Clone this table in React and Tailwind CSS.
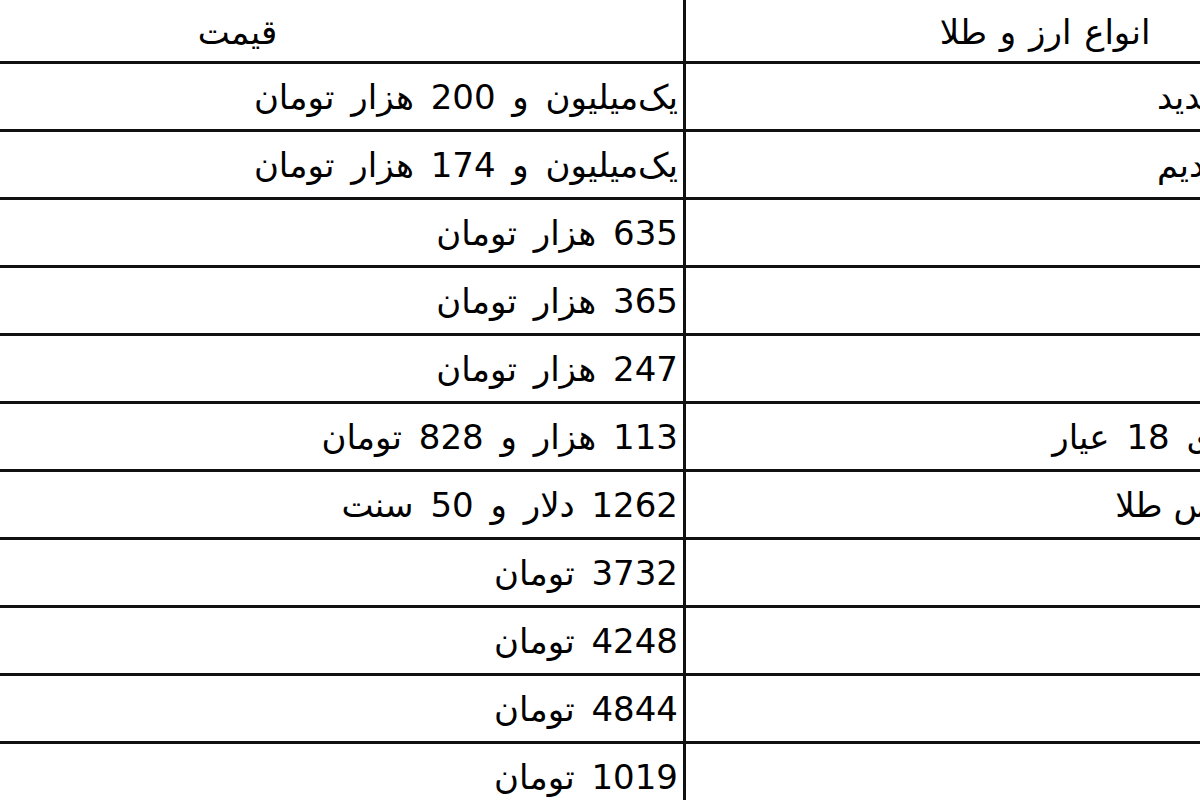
import React from "react";

const rows = [
  ["سکه طرح جدید", "یک‌میلیون و 200 هزار تومان", ""],
  ["سکه طرح قدیم", "یک‌میلیون و 174 هزار تومان", ""],
  ["نیم سکه", "635 هزار تومان", ""],
  ["ربع سکه", "365 هزار تومان", ""],
  ["سکه گرمی", "247 هزار تومان", ""],
  ["یک گرم طلای 18 عیار", "113 هزار و 828 تومان", ""],
  ["قیمت هر اونس طلا", "1262 دلار و 50 سنت", "[word-spacing:0px]"],
  ["دلار", "3732 تومان", ""],
  ["یورو", "4248 تومان", ""],
  ["پوند", "4844 تومان", ""],
  ["درهم", "1019 تومان", ""],
];

export default function App() {
  return (
    <div className="w-[1200px] h-[800px] overflow-hidden bg-white">
      <div
        dir="rtl"
        className="w-[1614px] -ml-[208px] flex flex-col text-black text-[34px] leading-none [word-spacing:6px]"
        style={{ fontFamily: '"DejaVu Sans", sans-serif' }}
      >
        <div className="flex h-[64px] border-b-[3px] border-[#111]">
          <div className="w-[720px] shrink-0 flex items-center justify-center pt-[2px]">
            <span className="mr-[2px] [word-spacing:2px]">انواع ارز و طلا</span>
          </div>
          <div className="w-[894px] shrink-0 border-r-[3px] border-[#111] flex items-center justify-center pt-[2px]">
            قیمت
          </div>
        </div>
        {rows.map(([name, price, extra], i) => (
          <div key={i} className="flex h-[68px] border-b-[3px] border-[#111]">
            <div className={"w-[720px] shrink-0 flex items-center pr-[16px] whitespace-nowrap " + extra}>
              {name}
            </div>
            <div className="w-[894px] shrink-0 border-r-[3px] border-[#111] flex items-center pr-[5px] whitespace-nowrap [word-spacing:6px]">
              {price}
            </div>
          </div>
        ))}
      </div>
    </div>
  );
}
